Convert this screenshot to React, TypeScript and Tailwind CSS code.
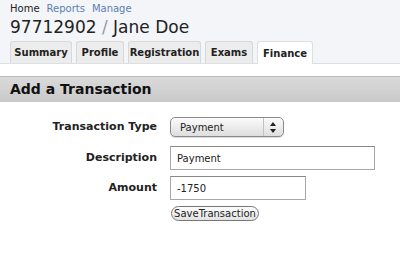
export default function App() {
  const tabs = [
    { label: "Summary", w: "w-[62px]" },
    { label: "Profile", w: "w-[48px]" },
    { label: "Registration", w: "w-[73px]" },
    { label: "Exams", w: "w-[48px]" },
    { label: "Finance", w: "w-[56px]", active: true },
  ];

  return (
    <div className="w-[400px] h-[253px] bg-white overflow-hidden font-['DejaVu_Sans',sans-serif] text-[#222]">
      {/* Header */}
      <div className="bg-[#f3f5f9] px-[10px] pt-[3px]">
        <nav className="flex gap-[7px] text-[10px] leading-[12px]">
          <a className="text-[#222]">Home</a>
          <a className="text-[#5b7eb0]">Reports</a>
          <a className="text-[#5b7eb0]">Manage</a>
        </nav>
        <h1 className="mt-[2px] text-[17px] leading-[20px] text-[#222]">
          97712902 <span className="text-[#999]">/</span> Jane Doe
        </h1>
        <div className="mt-[4px] flex gap-[4px] items-end">
          {tabs.map((t) => (
            <div
              key={t.label}
              className={`${t.w} h-[22px] flex items-center justify-center rounded-t-[3px] border border-b-0 text-[10px] font-bold ${
                t.active
                  ? "bg-white border-[#dcdfe4] h-[23px] -mb-px"
                  : "bg-[#ececec] border-[#d8d8d8]"
              }`}
            >
              {t.label}
            </div>
          ))}
        </div>
      </div>
      <div className="h-px bg-[#dcdfe4]" />

      {/* Section */}
      <div className="mt-[12px] h-[26px] border-t border-[#b8b8b8] bg-gradient-to-b from-[#dadada] to-[#c9c9c9] flex items-center px-[10px]">
        <h2 className="text-[14px] font-bold text-[#111]">Add a Transaction</h2>
      </div>

      {/* Form */}
      <div className="mt-[15px] grid grid-cols-[157px_1fr] gap-x-[13px] items-center text-[11px]">
        <label className="text-right font-bold">Transaction Type</label>
        <div className="flex">
          <div className="w-[114px] h-[20px] rounded-[5px] border border-[#8a8a8a] bg-gradient-to-b from-[#fbfbfb] to-[#dedede] flex items-center justify-between pl-[9px] pr-[7px] shadow-[0_1px_1px_rgba(0,0,0,0.15)]">
            <span className="text-[10px]">Payment</span>
            <div className="flex items-center h-full">
              <div className="w-px h-full bg-[#c2c2c2] mr-[6px]" />
              <svg width="6" height="11" viewBox="0 0 6 11">
                <path d="M3 0 L6 4 L0 4 Z" fill="#222" />
                <path d="M0 7 L6 7 L3 11 Z" fill="#222" />
              </svg>
            </div>
          </div>
        </div>

        <label className="mt-[9px] text-right font-bold">Description</label>
        <div className="mt-[9px] flex">
          <div className="w-[205px] h-[24px] border border-[#a8a8a8] border-t-[#888] flex items-center px-[6px] text-[10px]">
            Payment
          </div>
        </div>

        <label className="mt-[6px] text-right font-bold">Amount</label>
        <div className="mt-[6px] flex">
          <div className="w-[136px] h-[24px] border border-[#a8a8a8] border-t-[#888] flex items-center px-[6px] text-[10px]">
            -1750
          </div>
        </div>

        <div />
        <div className="mt-[6px] flex">
          <button className="w-[88px] h-[15px] rounded-full border border-[#777] bg-gradient-to-b from-[#fdfdfd] to-[#e2e2e2] text-[10px] leading-[13px] ml-[1px]">
            SaveTransaction
          </button>
        </div>
      </div>
    </div>
  );
}
